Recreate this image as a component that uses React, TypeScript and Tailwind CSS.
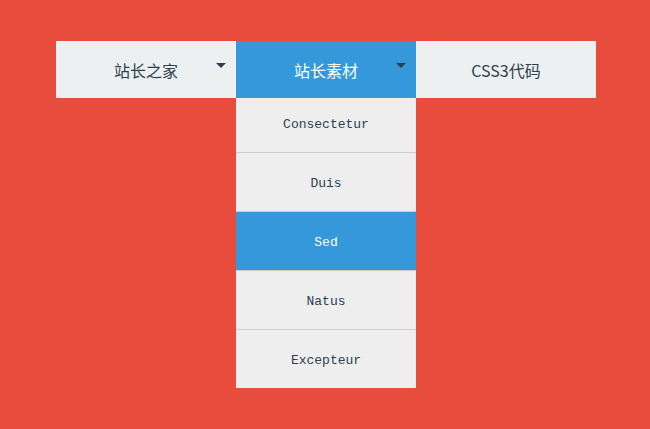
const NAV = [
	{ label: '站长之家', arrow: true, active: false },
	{ label: '站长素材', arrow: true, active: true },
	{ label: 'CSS3代码', arrow: false, active: false },
]

const MENU = ['Consectetur', 'Duis', 'Sed', 'Natus', 'Excepteur']

const Arrow = ({ color }: { color: string }) => (
	<span
		className="absolute right-[10px] top-[22px] w-0 h-0 border-l-[5px] border-r-[5px] border-t-[5px] border-l-transparent border-r-transparent"
		style={{ borderTopColor: color }}
	/>
)

const App = () => {
	return (
		<div className="w-[650px] h-[429px] bg-[#e74c3c] pt-[41px] pl-[56px] font-['Noto_Sans_CJK_SC',sans-serif]">
			<ul className="flex">
				{NAV.map((item) => (
					<li
						key={item.label}
						className={`relative w-[180px] h-[57px] ${item.active ? 'bg-[#3498db] text-white' : 'bg-[#ecf0f1] text-[#2c3e50]'}`}
					>
						<div className={`relative z-10 h-full flex items-center justify-center text-[16px] ${item.active ? 'bg-[#3498db]' : ''}`}>
							{item.label}
							{item.arrow && <Arrow color="#2c3e50" />}
						</div>
						{item.active && (
							<ul className="absolute left-0 top-[53px] w-[180px] bg-[#eeeeee] font-['Liberation_Mono',monospace] text-[13px]">
								{MENU.map((m, i) => {
									const last = i === MENU.length - 1
									return (
										<li
											key={m}
											className={`flex items-center justify-center pt-[3px] ${last ? 'h-[58px]' : 'h-[59px] border-b border-[#cccccc]'} ${m === 'Sed' ? 'bg-[#3498db] text-white' : 'text-[#2c3e50]'}`}
										>
											{m}
										</li>
									)
								})}
							</ul>
						)}
					</li>
				))}
			</ul>
		</div>
	)
}

export default App
